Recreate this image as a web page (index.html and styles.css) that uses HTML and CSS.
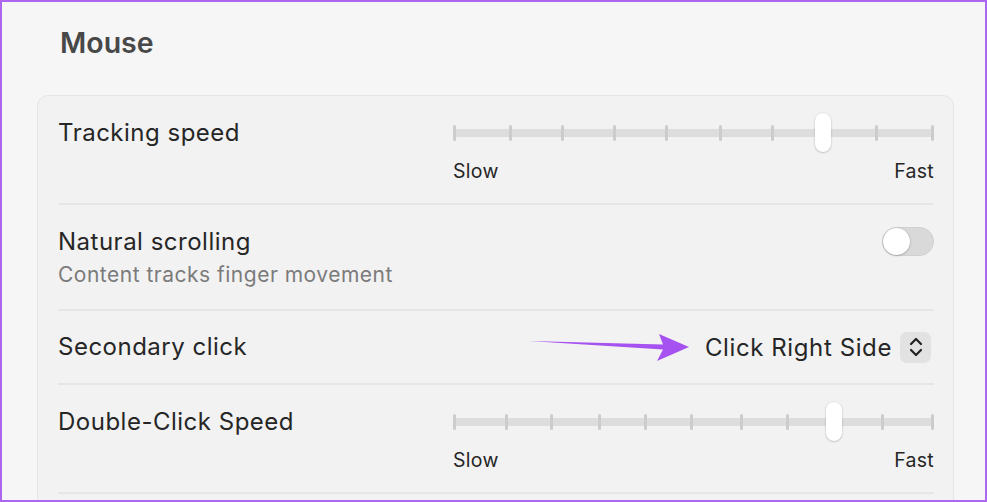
FILE: index.html
```html
<!DOCTYPE html>
<html lang="en">
<head>
    <meta charset="UTF-8">
    <meta name="viewport" content="width=device-width, initial-scale=1.0">
    <title>Mouse</title>
    <link rel="stylesheet" href="styles.css">
</head>
<body>
<div class="frame">
    <h1 class="title">Mouse</h1>

    <div class="card">
        <div class="row row-slider">
            <div class="label">Tracking speed</div>
            <div class="slider-box">
                <div class="slider">
                    <div class="track"></div>
                    <div class="tick" style="left:0px"></div>
                    <div class="tick" style="left:56px"></div>
                    <div class="tick" style="left:108px"></div>
                    <div class="tick" style="left:160px"></div>
                    <div class="tick" style="left:212px"></div>
                    <div class="tick" style="left:266px"></div>
                    <div class="tick" style="left:318px"></div>
                    <div class="tick" style="left:422px"></div>
                    <div class="tick" style="left:478px"></div>
                    <div class="thumb" style="left:362px"></div>
                </div>
                <div class="ends"><span>Slow</span><span>Fast</span></div>
            </div>
        </div>

        <div class="row row-toggle">
            <div>
                <div class="label">Natural scrolling</div>
                <div class="sub">Content tracks finger movement</div>
            </div>
            <div class="toggle"><div class="knob"></div></div>
        </div>

        <div class="row row-select">
            <div class="label">Secondary click</div>
            <svg class="arrow" width="170" height="36" viewBox="0 0 170 36">
                <path d="M2 10 L136 13.5 L132 3 L162 16 L130 30 L136 18.5 Z" fill="#a652f0"/>
            </svg>
            <div class="select">
                <span>Click Right Side</span>
                <span class="stepper">
                    <svg width="14" height="22" viewBox="0 0 14 22">
                        <path d="M2 8 L7 3 L12 8" fill="none" stroke="#222" stroke-width="2.2" stroke-linecap="round" stroke-linejoin="round"/>
                        <path d="M2 14 L7 19 L12 14" fill="none" stroke="#222" stroke-width="2.2" stroke-linecap="round" stroke-linejoin="round"/>
                    </svg>
                </span>
            </div>
        </div>

        <div class="row row-slider">
            <div class="label">Double-Click Speed</div>
            <div class="slider-box">
                <div class="slider">
                    <div class="track"></div>
                    <div class="tick" style="left:0px"></div>
                    <div class="tick" style="left:52px"></div>
                    <div class="tick" style="left:97px"></div>
                    <div class="tick" style="left:145px"></div>
                    <div class="tick" style="left:191px"></div>
                    <div class="tick" style="left:237px"></div>
                    <div class="tick" style="left:287px"></div>
                    <div class="tick" style="left:333px"></div>
                    <div class="tick" style="left:428px"></div>
                    <div class="tick" style="left:478px"></div>
                    <div class="thumb" style="left:373px"></div>
                </div>
                <div class="ends"><span>Slow</span><span>Fast</span></div>
            </div>
        </div>
    </div>
</div>
</body>
</html>
```

FILE: styles.css
```css
body {
    margin: 0;
    font-family: Inter, "Noto Sans", sans-serif;
    color: #262626;
}
.frame {
    width: 987px;
    height: 502px;
    box-sizing: border-box;
    border: 2px solid #ad66f0;
    background-color: #f6f6f6;
    overflow: hidden;
}
.title {
    margin: 21px 0 0 58px;
    height: 40px;
    line-height: 40px;
    font-size: 28.5px;
    font-weight: 600;
    color: #484848;
}
.card {
    margin: 32px 0 0 35px;
    width: 917px;
    height: 440px;
    box-sizing: border-box;
    background-color: #f2f2f2;
    border: 1px solid #e5e5e5;
    border-radius: 11px;
}
.row {
    margin: 0 19px 0 20px;
    border-bottom: 2px solid #e6e6e6;
    display: flex;
    justify-content: space-between;
    box-sizing: border-box;
}
.label {
    font-size: 24px;
    letter-spacing: 0.5px;
    line-height: 40px;
}
.sub {
    font-size: 21px;
    letter-spacing: 0.5px;
    line-height: 26px;
    color: #7b7b7b;
}
.row-slider {
    height: 109px;
    padding-top: 17px;
}
.slider-box {
    width: 481px;
}
.slider {
    position: relative;
    height: 40px;
}
.track {
    position: absolute;
    left: 0;
    right: 0;
    top: 16px;
    height: 8px;
    border-radius: 4px;
    background-color: #dddddd;
}
.tick {
    position: absolute;
    top: 12px;
    width: 3px;
    height: 16px;
    border-radius: 2px;
    background-color: #cccccc;
}
.thumb {
    position: absolute;
    top: 0;
    width: 16px;
    height: 39px;
    border-radius: 8px;
    background-color: #ffffff;
    box-shadow: 0 0.5px 2px rgba(0, 0, 0, 0.3);
}
.ends {
    display: flex;
    justify-content: space-between;
    margin-top: 5px;
    font-size: 19.5px;
    letter-spacing: 0.3px;
    line-height: 26px;
}
.row-toggle {
    height: 106px;
    padding-top: 17px;
}
.toggle {
    margin-top: 5px;
    width: 52px;
    height: 29px;
    box-sizing: border-box;
    border-radius: 15px;
    background-color: #d9d9d9;
    border: 1px solid #d0d0d0;
    position: relative;
}
.knob {
    position: absolute;
    left: 0;
    top: 0;
    width: 27px;
    height: 27px;
    border-radius: 50%;
    background-color: #ffffff;
    box-shadow: 0 0.5px 2px rgba(0, 0, 0, 0.35);
}
.row-select {
    height: 74px;
    align-items: center;
    position: relative;
}
.arrow {
    position: absolute;
    left: 469px;
    top: 20px;
}
.select {
    display: flex;
    align-items: center;
    font-size: 24px;
    letter-spacing: 0.6px;
    margin-right: 3px;
}
.stepper {
    margin-left: 8px;
    width: 31px;
    height: 31px;
    border-radius: 7px;
    background-color: #e2e2e2;
    display: flex;
    align-items: center;
    justify-content: center;
}
```
